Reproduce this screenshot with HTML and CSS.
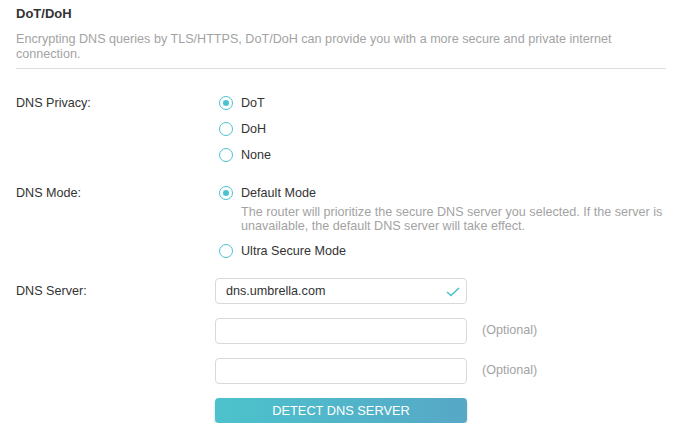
FILE: index.html
```html
<!DOCTYPE html>
<html lang="en">
<head>
    <meta charset="UTF-8">
    <meta name="viewport" content="width=device-width, initial-scale=1.0">
    <title>DoT/DoH</title>
    <link rel="stylesheet" href="styles.css">
</head>
<body>
    <div class="panel">
        <h2 class="panel-title">DoT/DoH</h2>
        <p class="panel-desc">Encrypting DNS queries by TLS/HTTPS, DoT/DoH can provide you with a more secure and private internet connection.</p>
        <div class="divider"></div>

        <div class="form-row">
            <div class="label">DNS Privacy:</div>
            <div class="radio-group">
                <label class="radio checked"><span class="radio-dot"></span>DoT</label>
                <label class="radio"><span class="radio-dot"></span>DoH</label>
                <label class="radio"><span class="radio-dot"></span>None</label>
            </div>
        </div>

        <div class="form-row mode-row">
            <div class="label">DNS Mode:</div>
            <div class="radio-group">
                <label class="radio checked"><span class="radio-dot"></span>Default Mode</label>
                <p class="radio-hint">The router will prioritize the secure DNS server you selected. If the server is unavailable, the default DNS server will take effect.</p>
                <label class="radio ultra"><span class="radio-dot"></span>Ultra Secure Mode</label>
            </div>
        </div>

        <div class="form-row server-row">
            <div class="label tall">DNS Server:</div>
            <div class="field-list">
                <div class="field">
                    <div class="input valid">
                        dns.umbrella.com
                        <svg class="check" width="14" height="10" viewBox="0 0 14 10">
                            <path d="M1 5 L5 8.5 L13 1" fill="none" stroke="#4cc2cf" stroke-width="1.6"/>
                        </svg>
                    </div>
                </div>
                <div class="field">
                    <div class="input"></div>
                    <span class="hint">(Optional)</span>
                </div>
                <div class="field">
                    <div class="input"></div>
                    <span class="hint">(Optional)</span>
                </div>
                <button class="btn">DETECT DNS SERVER</button>
            </div>
        </div>
    </div>
</body>
</html>
```

FILE: styles.css
```css
body {
    margin: 0;
    font-family: "Liberation Sans", Arial, sans-serif;
    font-size: 12.6px;
    color: #333;
    background: #fff;
}

.panel {
    padding: 5px 16px 0;
}

.panel-title {
    margin: 0;
    font-size: 13px;
    line-height: 18px;
    font-weight: bold;
    color: #333;
}

.panel-desc {
    margin: 9px 0 0;
    line-height: 15px;
    color: #a3a3a3;
}

.divider {
    margin-top: 6px;
    border-top: 1px solid #dedede;
}

.form-row {
    display: flex;
    margin-top: 24px;
}

.mode-row {
    margin-top: 18px;
}

.server-row {
    margin-top: 17px;
}

.label {
    width: 199px;
    flex-shrink: 0;
    line-height: 20px;
}

.label.tall {
    line-height: 26px;
}

.radio-group {
    display: flex;
    flex-direction: column;
    gap: 6px;
    flex: 1;
}

.radio {
    display: flex;
    align-items: center;
    line-height: 20px;
    padding-left: 4px;
}

.radio-dot {
    width: 14px;
    height: 14px;
    box-sizing: border-box;
    border: 1px solid #4cc2cf;
    border-radius: 50%;
    margin-right: 8px;
    position: relative;
}

.radio.checked .radio-dot::after {
    content: "";
    position: absolute;
    left: 3px;
    top: 3px;
    width: 6px;
    height: 6px;
    border-radius: 50%;
    background: #4cc2cf;
}

.radio-hint {
    margin: -4px 0 0 26px;
    line-height: 14px;
    color: #a3a3a3;
}

.radio.ultra {
    margin-top: 2px;
}

.field-list {
    display: flex;
    flex-direction: column;
    gap: 14px;
}

.field {
    display: flex;
    align-items: center;
}

.input {
    width: 252px;
    height: 26px;
    box-sizing: border-box;
    border: 1px solid #d9d9d9;
    border-radius: 4px;
    padding: 0 10px;
    line-height: 24px;
    color: #333;
    position: relative;
}

.check {
    position: absolute;
    right: 6px;
    top: 8px;
}

.hint {
    margin-left: 15px;
    margin-top: -2px;
    color: #a3a3a3;
}

.btn {
    width: 252px;
    height: 25px;
    border: none;
    border-radius: 4px;
    background: linear-gradient(90deg, #4cc2cc, #57a8c6);
    box-shadow: 0 2px 3px rgba(0, 0, 0, 0.18);
    color: #fff;
    font-family: "Liberation Sans", Arial, sans-serif;
    font-size: 12.8px;
    padding: 0;
}
```
